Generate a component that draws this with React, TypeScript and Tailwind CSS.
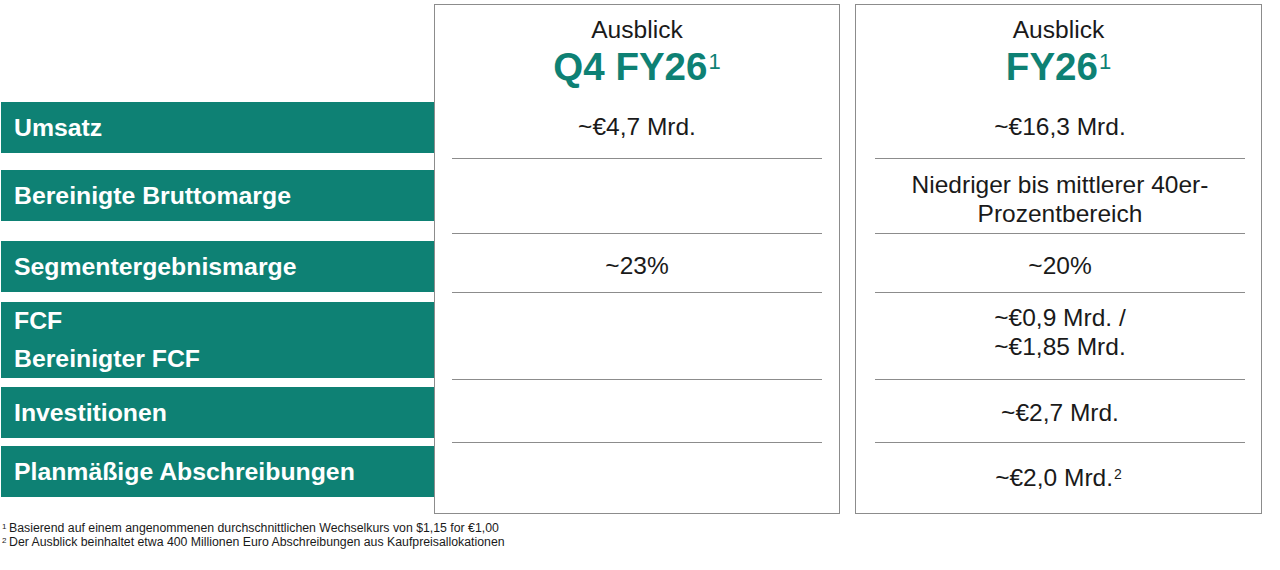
const teal = "bg-[#0e8174]";

const labels = [
  { lines: ["Umsatz"], cls: "mt-[102px] h-[51px]" },
  { lines: ["Bereinigte Bruttomarge"], cls: "mt-[17px] h-[51px]" },
  { lines: ["Segmentergebnismarge"], cls: "mt-[20px] h-[51px]" },
  { lines: ["FCF", "Bereinigter FCF"], cls: "mt-[10px] h-[76px]" },
  { lines: ["Investitionen"], cls: "mt-[9px] h-[51px]" },
  { lines: ["Planmäßige Abschreibungen"], cls: "mt-[8px] h-[51px]" },
];

// heights and top paddings of the value rows, shared by both cards
const rowCls = [
  "h-[57px] pt-[10px]",
  "h-[75px] pt-[11px]",
  "h-[59px] pt-[17px]",
  "h-[87px] pt-[10px]",
  "h-[63px] pt-[18px]",
];

interface CardProps {
  title: string;
  values: React.ReactNode[];
  last: React.ReactNode;
  lineCls: string;
  width: string;
}

const Card = ({ title, values, last, lineCls, width }: CardProps) => {
  return (
    <div className={`mt-[4px] h-[510px] ${width} border border-[#8c8c8c] flex flex-col text-[#1a1a1a]`}>
      <div className="h-[97px] flex flex-col items-center">
        <div className="mt-[11px] text-[24.6px] leading-[28px]">Ausblick</div>
        <div className="mt-[3px] text-[38.5px] leading-[40px] font-bold text-[#0e8174]">
          {title}
          <sup className="text-[22px] font-normal ml-[1px]">1</sup>
        </div>
      </div>
      {values.map((v, i) => (
        <div key={i} className={`${rowCls[i]} ${lineCls} border-b border-[#8c8c8c] box-border text-center text-[24.5px] leading-[29px]`}>
          {v}
        </div>
      ))}
      <div className="flex-1 pt-[20px] text-center text-[24.5px] leading-[29px]">{last}</div>
    </div>
  );
};

export default function App() {
  return (
    <div className="w-[1280px] h-[570px] bg-white overflow-hidden" style={{ fontFamily: '"Liberation Sans", Arial, sans-serif' }}>
      <div className="flex">
        <div className="ml-[1px] w-[433px] flex flex-col">
          {labels.map((l, i) => (
            <div key={i} className={`${l.cls} ${teal} flex flex-col justify-center pl-[13px] text-white font-bold text-[24.8px] leading-[38px]`}>
              {l.lines.map((t) => (
                <div key={t}>{t}</div>
              ))}
            </div>
          ))}
        </div>
        <Card
          title="Q4 FY26"
          width="w-[406px]"
          lineCls="mx-[17px]"
          values={["~€4,7 Mrd.", "", "~23%", "", ""]}
          last=""
        />
        <div className="w-[15px]" />
        <Card
          title="FY26"
          width="w-[407px]"
          lineCls="ml-[19px] mr-[16px]"
          values={[
            "~€16,3 Mrd.",
            <>
              Niedriger bis mittlerer 40er-
              <br />
              Prozentbereich
            </>,
            "~20%",
            <>
              ~€0,9 Mrd. /
              <br />
              ~€1,85 Mrd.
            </>,
            "~€2,7 Mrd.",
          ]}
          last={
            <>
              ~€2,0 Mrd.<sup className="text-[14px] ml-[1px]">2</sup>
            </>
          }
        />
      </div>
      <div className="mt-[8px] text-[12.3px] leading-[13.5px] text-[#1a1a1a]">
        <div className="flex">
          <span className="w-[9px] pl-[2px] text-[8px] leading-[10px]">1</span>
          <span>Basierend auf einem angenommenen durchschnittlichen Wechselkurs von $1,15 for €1,00</span>
        </div>
        <div className="flex">
          <span className="w-[9px] pl-[2px] text-[8px] leading-[10px]">2</span>
          <span>Der Ausblick beinhaltet etwa 400 Millionen Euro Abschreibungen aus Kaufpreisallokationen</span>
        </div>
      </div>
    </div>
  );
}
